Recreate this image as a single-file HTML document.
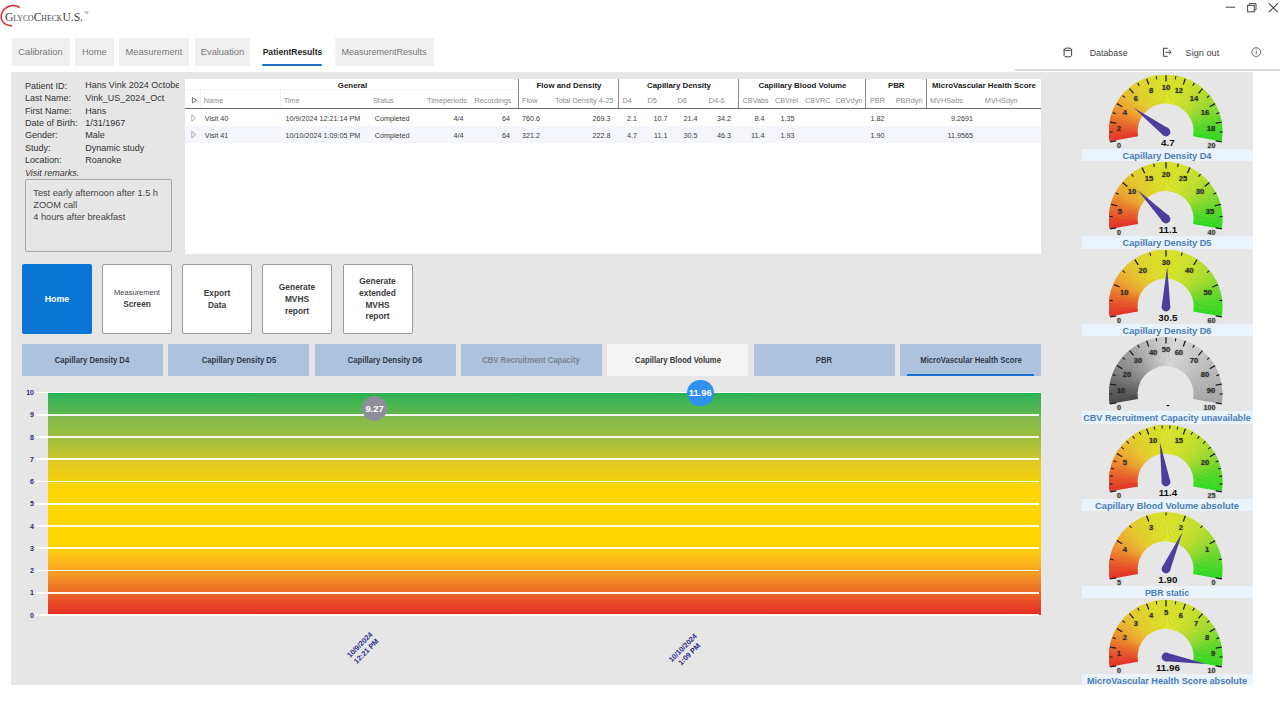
<!DOCTYPE html>
<html><head><meta charset="utf-8"><style>
html,body{margin:0;padding:0;background:#fff;width:1280px;height:720px;overflow:hidden;position:relative;font-family:"Liberation Sans", sans-serif;}
.b{position:absolute;}
.t{position:absolute;white-space:nowrap;line-height:1;}
svg text{font-family:"Liberation Sans",sans-serif;}
</style></head><body>
<svg class="b" style="left:0;top:0" width="100" height="32" viewBox="0 0 100 32">
<path d="M19.6 7.5 C 14 3.8, 4 5.5, 1.4 14.5 C -0.3 21, 5 25.6, 12 25.8" fill="none" stroke="#d42a32" stroke-width="1.5"/>
<text x="5" y="20.7" style="font-family:'Liberation Serif',serif;font-variant:small-caps;font-size:13.5px" fill="#3c3c3c" textLength="78" lengthAdjust="spacingAndGlyphs">GlycoCheckU.S.</text>
<text x="84" y="13.5" style="font-family:'Liberation Sans',sans-serif;font-size:3px" fill="#777">TM</text>
</svg>
<svg class="b" style="left:1220px;top:0" width="60" height="16" viewBox="0 0 60 16">
<line x1="5.8" y1="7.2" x2="15.2" y2="7.2" stroke="#444" stroke-width="1"/>
<rect x="27.6" y="5.4" width="6.6" height="6.4" fill="none" stroke="#444" stroke-width="1"/>
<path d="M29.4 5.4 V3.6 H36 V10 H34.2" fill="none" stroke="#444" stroke-width="1"/>
<path d="M48.8 3.4 L57.8 12.2 M57.8 3.4 L48.8 12.2" stroke="#444" stroke-width="1.1"/>
</svg>
<div class="b" style="left:11.5px;top:37.5px;width:58.0px;height:28px;background:#f0f0f0;"></div>
<div class="t" style="left:-259.50px;width:600px;text-align:center;top:47.73px;font-size:9.3px;color:#787878;font-weight:normal;font-style:normal;">Calibration</div>
<div class="b" style="left:75px;top:37.5px;width:38.6px;height:28px;background:#f0f0f0;"></div>
<div class="t" style="left:-205.70px;width:600px;text-align:center;top:47.73px;font-size:9.3px;color:#787878;font-weight:normal;font-style:normal;">Home</div>
<div class="b" style="left:119px;top:37.5px;width:69.8px;height:28px;background:#f0f0f0;"></div>
<div class="t" style="left:-146.10px;width:600px;text-align:center;top:47.73px;font-size:9.3px;color:#787878;font-weight:normal;font-style:normal;">Measurement</div>
<div class="b" style="left:195px;top:37.5px;width:55px;height:28px;background:#f0f0f0;"></div>
<div class="t" style="left:-77.50px;width:600px;text-align:center;top:47.73px;font-size:9.3px;color:#787878;font-weight:normal;font-style:normal;">Evaluation</div>
<div class="t" style="left:-7.50px;width:600px;text-align:center;top:48.32px;font-size:8.6px;color:#1f1f1f;font-weight:bold;font-style:normal;">PatientResults</div>
<div class="b" style="left:262.3px;top:64.3px;width:60.2px;height:1.7px;background:#1d6cc4;border-radius:1px;"></div>
<div class="b" style="left:334.5px;top:37.5px;width:99px;height:28px;background:#f0f0f0;"></div>
<div class="t" style="left:84.00px;width:600px;text-align:center;top:47.98px;font-size:9px;color:#787878;font-weight:normal;font-style:normal;">MeasurementResults</div>
<svg class="b" style="left:1060px;top:44px" width="210" height="18" viewBox="0 0 210 18">
<ellipse cx="7.85" cy="5.3" rx="3.75" ry="1.25" fill="none" stroke="#3a3a3a" stroke-width="1"/>
<path d="M4.1 5.3 V11.7 A3.75 1.25 0 0 0 11.6 11.7 V5.3" fill="none" stroke="#3a3a3a" stroke-width="1"/>
<path d="M107.6 4.3 H103.4 V12.3 H107.6" fill="none" stroke="#3a3a3a" stroke-width="1"/>
<path d="M105.4 8.3 H110.8 M109.1 6.4 L111.1 8.3 L109.1 10.2" fill="none" stroke="#3a3a3a" stroke-width="0.95"/>
<circle cx="196.25" cy="8.1" r="4.4" fill="none" stroke="#555" stroke-width="0.9"/>
<line x1="196.25" y1="6.9" x2="196.25" y2="10.2" stroke="#555" stroke-width="0.9"/>
<circle cx="196.25" cy="5.6" r="0.5" fill="#777"/>
</svg>
<div class="t" style="left:1089.70px;top:49.41px;font-size:8.85px;color:#444;font-weight:normal;font-style:normal;">Database</div>
<div class="t" style="left:1185.50px;top:49.11px;font-size:9.2px;color:#444;font-weight:normal;font-style:normal;">Sign out</div>
<div class="b" style="left:1015px;top:69px;width:265px;height:2px;background:#d6d6d6;"></div>
<div class="b" style="left:11px;top:72px;width:1242px;height:613px;background:#e6e6e6;"></div>
<div class="t" style="left:24.90px;top:81.88px;font-size:9px;color:#333;font-weight:normal;font-style:normal;">Patient ID:</div>
<div class="t" style="left:85.3px;top:81.36px;width:94px;overflow:hidden;font-size:9px;color:#333">Hans Vink 2024 October</div>
<div class="t" style="left:24.90px;top:94.23px;font-size:9px;color:#333;font-weight:normal;font-style:normal;">Last Name:</div>
<div class="t" style="left:85.30px;top:94.23px;font-size:9px;color:#333;font-weight:normal;font-style:normal;">Vink_US_2024_Oct</div>
<div class="t" style="left:24.90px;top:106.58px;font-size:9px;color:#333;font-weight:normal;font-style:normal;">First Name:</div>
<div class="t" style="left:85.30px;top:106.58px;font-size:9px;color:#333;font-weight:normal;font-style:normal;">Hans</div>
<div class="t" style="left:24.90px;top:118.93px;font-size:9px;color:#333;font-weight:normal;font-style:normal;">Date of Birth:</div>
<div class="t" style="left:85.30px;top:118.93px;font-size:9px;color:#333;font-weight:normal;font-style:normal;">1/31/1967</div>
<div class="t" style="left:24.90px;top:131.28px;font-size:9px;color:#333;font-weight:normal;font-style:normal;">Gender:</div>
<div class="t" style="left:85.30px;top:131.28px;font-size:9px;color:#333;font-weight:normal;font-style:normal;">Male</div>
<div class="t" style="left:24.90px;top:143.63px;font-size:9px;color:#333;font-weight:normal;font-style:normal;">Study:</div>
<div class="t" style="left:85.30px;top:143.63px;font-size:9px;color:#333;font-weight:normal;font-style:normal;">Dynamic study</div>
<div class="t" style="left:24.90px;top:155.98px;font-size:9px;color:#333;font-weight:normal;font-style:normal;">Location:</div>
<div class="t" style="left:85.30px;top:155.98px;font-size:9px;color:#333;font-weight:normal;font-style:normal;">Roanoke</div>
<div class="t" style="left:24.90px;top:169.08px;font-size:9px;color:#333;font-weight:normal;font-style:italic;">Visit remarks.</div>
<div class="b" style="left:25px;top:179.2px;width:147px;height:73.3px;background:#e6e6e6;border:1px solid #a8a8a8;border-radius:2px;box-sizing:border-box;"></div>
<div class="t" style="left:33.30px;top:188.51px;font-size:9.2px;color:#444;font-weight:normal;font-style:normal;">Test early afternoon after 1.5 h</div>
<div class="t" style="left:33.30px;top:200.81px;font-size:9.2px;color:#444;font-weight:normal;font-style:normal;">ZOOM call</div>
<div class="t" style="left:33.30px;top:213.11px;font-size:9.2px;color:#444;font-weight:normal;font-style:normal;">4 hours after breakfast</div>
<div class="b" style="left:185px;top:79px;width:855.5px;height:175px;background:#fff;"></div>
<div class="b" style="left:185px;top:126px;width:855.5px;height:16.5px;background:#f4f6fb;"></div>
<div class="b" style="left:185px;top:107.5px;width:855.5px;height:1.6px;background:#6e6e6e;"></div>
<div class="b" style="left:200px;top:90px;width:1px;height:18px;background:#f0f0f0;"></div>
<div class="b" style="left:280px;top:90px;width:1px;height:18px;background:#f0f0f0;"></div>
<div class="b" style="left:185px;top:89px;width:333px;height:1px;background:#f4f4f4;"></div>
<div class="b" style="left:518px;top:79px;width:1.4px;height:29px;background:#8a8a8a;"></div>
<div class="b" style="left:618px;top:79px;width:1.4px;height:29px;background:#8a8a8a;"></div>
<div class="b" style="left:738px;top:79px;width:1.4px;height:29px;background:#8a8a8a;"></div>
<div class="b" style="left:865px;top:79px;width:1.4px;height:29px;background:#8a8a8a;"></div>
<div class="b" style="left:925.5px;top:79px;width:1.4px;height:29px;background:#8a8a8a;"></div>
<div class="t" style="left:52.50px;width:600px;text-align:center;top:81.51px;font-size:7.9px;color:#1a1a1a;font-weight:bold;font-style:normal;">General</div>
<div class="t" style="left:269.00px;width:600px;text-align:center;top:81.51px;font-size:7.9px;color:#1a1a1a;font-weight:bold;font-style:normal;">Flow and Density</div>
<div class="t" style="left:379.00px;width:600px;text-align:center;top:81.51px;font-size:7.9px;color:#1a1a1a;font-weight:bold;font-style:normal;">Capillary Density</div>
<div class="t" style="left:502.50px;width:600px;text-align:center;top:81.51px;font-size:7.9px;color:#1a1a1a;font-weight:bold;font-style:normal;">Capillary Blood Volume</div>
<div class="t" style="left:596.25px;width:600px;text-align:center;top:81.51px;font-size:7.9px;color:#1a1a1a;font-weight:bold;font-style:normal;">PBR</div>
<div class="t" style="left:684.00px;width:600px;text-align:center;top:81.51px;font-size:7.9px;color:#1a1a1a;font-weight:bold;font-style:normal;">MicroVascular Health Score</div>
<div class="t" style="left:203.75px;top:97.02px;font-size:7.3px;color:#8c8c8c;font-weight:normal;font-style:normal;">Name</div>
<div class="t" style="left:283.75px;top:97.02px;font-size:7.3px;color:#8c8c8c;font-weight:normal;font-style:normal;">Time</div>
<div class="t" style="left:373.00px;top:97.02px;font-size:7.3px;color:#8c8c8c;font-weight:normal;font-style:normal;">Status</div>
<div class="t" style="left:427.00px;top:97.02px;font-size:7.3px;color:#8c8c8c;font-weight:normal;font-style:normal;">Timeperiods</div>
<div class="t" style="left:474.50px;top:97.02px;font-size:7.3px;color:#8c8c8c;font-weight:normal;font-style:normal;">Recordings</div>
<div class="t" style="left:522.00px;top:97.02px;font-size:7.3px;color:#8c8c8c;font-weight:normal;font-style:normal;">Flow</div>
<div class="t" style="left:555.00px;top:97.02px;font-size:7.3px;color:#8c8c8c;font-weight:normal;font-style:normal;">Total Density 4-25</div>
<div class="t" style="left:622.50px;top:97.02px;font-size:7.3px;color:#8c8c8c;font-weight:normal;font-style:normal;">D4</div>
<div class="t" style="left:647.50px;top:97.02px;font-size:7.3px;color:#8c8c8c;font-weight:normal;font-style:normal;">D5</div>
<div class="t" style="left:677.50px;top:97.02px;font-size:7.3px;color:#8c8c8c;font-weight:normal;font-style:normal;">D6</div>
<div class="t" style="left:708.75px;top:97.02px;font-size:7.3px;color:#8c8c8c;font-weight:normal;font-style:normal;">D4-6</div>
<div class="t" style="left:742.50px;top:97.02px;font-size:7.3px;color:#8c8c8c;font-weight:normal;font-style:normal;">CBVabs</div>
<div class="t" style="left:775.00px;top:97.02px;font-size:7.3px;color:#8c8c8c;font-weight:normal;font-style:normal;">CBVrel</div>
<div class="t" style="left:805.00px;top:97.02px;font-size:7.3px;color:#8c8c8c;font-weight:normal;font-style:normal;">CBVRC</div>
<div class="t" style="left:835.60px;top:97.02px;font-size:7.3px;color:#8c8c8c;font-weight:normal;font-style:normal;">CBVdyn</div>
<div class="t" style="left:870.00px;top:97.02px;font-size:7.3px;color:#8c8c8c;font-weight:normal;font-style:normal;">PBR</div>
<div class="t" style="left:895.75px;top:97.02px;font-size:7.3px;color:#8c8c8c;font-weight:normal;font-style:normal;">PBRdyn</div>
<div class="t" style="left:930.00px;top:97.02px;font-size:7.3px;color:#8c8c8c;font-weight:normal;font-style:normal;">MVHSabs</div>
<div class="t" style="left:984.80px;top:97.02px;font-size:7.3px;color:#8c8c8c;font-weight:normal;font-style:normal;">MVHSdyn</div>
<svg class="b" style="left:185px;top:90px" width="20" height="60" viewBox="0 0 20 60"><path d="M7.4 7.6 L11.6 10.3 L7.4 13 Z" fill="none" stroke="#666" stroke-width="0.9"/><path d="M6.8 24.8 L10.6 28 L6.8 31.2 Z" fill="none" stroke="#999" stroke-width="0.8"/><path d="M6.8 41.4 L10.6 44.6 L6.8 47.8 Z" fill="none" stroke="#999" stroke-width="0.8"/></svg>
<div class="t" style="left:204.75px;top:114.51px;font-size:7.2px;color:#393939;font-weight:normal;font-style:normal;">Visit 40</div>
<div class="t" style="left:285.60px;top:114.51px;font-size:7.2px;color:#393939;font-weight:normal;font-style:normal;">10/9/2024 12:21:14 PM</div>
<div class="t" style="left:374.75px;top:114.51px;font-size:7.2px;color:#393939;font-weight:normal;font-style:normal;">Completed</div>
<div class="t" style="right:816.50px;top:114.51px;font-size:7.2px;color:#393939;font-weight:normal;font-style:normal;">4/4</div>
<div class="t" style="right:770.00px;top:114.51px;font-size:7.2px;color:#393939;font-weight:normal;font-style:normal;">64</div>
<div class="t" style="left:522.00px;top:114.51px;font-size:7.2px;color:#393939;font-weight:normal;font-style:normal;">760.6</div>
<div class="t" style="right:669.40px;top:114.51px;font-size:7.2px;color:#393939;font-weight:normal;font-style:normal;">269.3</div>
<div class="t" style="right:643.00px;top:114.51px;font-size:7.2px;color:#393939;font-weight:normal;font-style:normal;">2.1</div>
<div class="t" style="right:612.50px;top:114.51px;font-size:7.2px;color:#393939;font-weight:normal;font-style:normal;">10.7</div>
<div class="t" style="right:582.50px;top:114.51px;font-size:7.2px;color:#393939;font-weight:normal;font-style:normal;">21.4</div>
<div class="t" style="right:549.00px;top:114.51px;font-size:7.2px;color:#393939;font-weight:normal;font-style:normal;">34.2</div>
<div class="t" style="right:515.60px;top:114.51px;font-size:7.2px;color:#393939;font-weight:normal;font-style:normal;">8.4</div>
<div class="t" style="right:485.60px;top:114.51px;font-size:7.2px;color:#393939;font-weight:normal;font-style:normal;">1.35</div>
<div class="t" style="right:395.60px;top:114.51px;font-size:7.2px;color:#393939;font-weight:normal;font-style:normal;">1.82</div>
<div class="t" style="right:307.00px;top:114.51px;font-size:7.2px;color:#393939;font-weight:normal;font-style:normal;">9.2691</div>
<div class="t" style="left:204.75px;top:131.61px;font-size:7.2px;color:#393939;font-weight:normal;font-style:normal;">Visit 41</div>
<div class="t" style="left:285.60px;top:131.61px;font-size:7.2px;color:#393939;font-weight:normal;font-style:normal;">10/10/2024 1:09:05 PM</div>
<div class="t" style="left:374.75px;top:131.61px;font-size:7.2px;color:#393939;font-weight:normal;font-style:normal;">Completed</div>
<div class="t" style="right:816.50px;top:131.61px;font-size:7.2px;color:#393939;font-weight:normal;font-style:normal;">4/4</div>
<div class="t" style="right:770.00px;top:131.61px;font-size:7.2px;color:#393939;font-weight:normal;font-style:normal;">64</div>
<div class="t" style="left:522.00px;top:131.61px;font-size:7.2px;color:#393939;font-weight:normal;font-style:normal;">321.2</div>
<div class="t" style="right:669.40px;top:131.61px;font-size:7.2px;color:#393939;font-weight:normal;font-style:normal;">222.8</div>
<div class="t" style="right:643.00px;top:131.61px;font-size:7.2px;color:#393939;font-weight:normal;font-style:normal;">4.7</div>
<div class="t" style="right:612.50px;top:131.61px;font-size:7.2px;color:#393939;font-weight:normal;font-style:normal;">11.1</div>
<div class="t" style="right:582.50px;top:131.61px;font-size:7.2px;color:#393939;font-weight:normal;font-style:normal;">30.5</div>
<div class="t" style="right:549.00px;top:131.61px;font-size:7.2px;color:#393939;font-weight:normal;font-style:normal;">46.3</div>
<div class="t" style="right:515.60px;top:131.61px;font-size:7.2px;color:#393939;font-weight:normal;font-style:normal;">11.4</div>
<div class="t" style="right:485.60px;top:131.61px;font-size:7.2px;color:#393939;font-weight:normal;font-style:normal;">1.93</div>
<div class="t" style="right:395.60px;top:131.61px;font-size:7.2px;color:#393939;font-weight:normal;font-style:normal;">1.90</div>
<div class="t" style="right:307.00px;top:131.61px;font-size:7.2px;color:#393939;font-weight:normal;font-style:normal;">11.9565</div>
<div class="b" style="left:21.5px;top:263.5px;width:70px;height:70.2px;background:#0b75d5;border-radius:2px;"></div>
<div class="t" style="left:-243.00px;width:600px;text-align:center;top:294.55px;font-size:8.8px;color:#fff;font-weight:bold;font-style:normal;">Home</div>
<div class="b" style="left:102px;top:264px;width:70px;height:70px;background:#fff;border:1px solid #9a9a9a;border-radius:2px;box-sizing:border-box;"></div>
<div class="t" style="left:-163.00px;width:600px;text-align:center;top:288.85px;font-size:7.5px;color:#3c3c3c;font-weight:normal;font-style:normal;">Measurement</div>
<div class="t" style="left:-163.00px;width:600px;text-align:center;top:300.17px;font-size:8.3px;color:#3c3c3c;font-weight:bold;font-style:normal;">Screen</div>
<div class="b" style="left:182px;top:264px;width:70px;height:70px;background:#fff;border:1px solid #9a9a9a;border-radius:2px;box-sizing:border-box;"></div>
<div class="t" style="left:-83.00px;width:600px;text-align:center;top:289.04px;font-size:8.4px;color:#3c3c3c;font-weight:bold;font-style:normal;">Export</div>
<div class="t" style="left:-83.00px;width:600px;text-align:center;top:300.74px;font-size:8.4px;color:#3c3c3c;font-weight:bold;font-style:normal;">Data</div>
<div class="b" style="left:262px;top:264px;width:70px;height:70px;background:#fff;border:1px solid #9a9a9a;border-radius:2px;box-sizing:border-box;"></div>
<div class="t" style="left:-3.00px;width:600px;text-align:center;top:283.19px;font-size:8.4px;color:#3c3c3c;font-weight:bold;font-style:normal;">Generate</div>
<div class="t" style="left:-3.00px;width:600px;text-align:center;top:294.89px;font-size:8.4px;color:#3c3c3c;font-weight:bold;font-style:normal;">MVHS</div>
<div class="t" style="left:-3.00px;width:600px;text-align:center;top:306.59px;font-size:8.4px;color:#3c3c3c;font-weight:bold;font-style:normal;">report</div>
<div class="b" style="left:342.5px;top:264px;width:70px;height:70px;background:#fff;border:1px solid #9a9a9a;border-radius:2px;box-sizing:border-box;"></div>
<div class="t" style="left:77.50px;width:600px;text-align:center;top:277.34px;font-size:8.4px;color:#3c3c3c;font-weight:bold;font-style:normal;">Generate</div>
<div class="t" style="left:77.50px;width:600px;text-align:center;top:289.04px;font-size:8.4px;color:#3c3c3c;font-weight:bold;font-style:normal;">extended</div>
<div class="t" style="left:77.50px;width:600px;text-align:center;top:300.74px;font-size:8.4px;color:#3c3c3c;font-weight:bold;font-style:normal;">MVHS</div>
<div class="t" style="left:77.50px;width:600px;text-align:center;top:312.44px;font-size:8.4px;color:#3c3c3c;font-weight:bold;font-style:normal;">report</div>
<div class="b" style="left:21.75px;top:344px;width:141px;height:32px;background:#adc2dc;"></div>
<div class="t" style="left:-207.75px;width:600px;text-align:center;top:355.95px;font-size:8.8px;color:#2f3a4c;font-weight:bold;font-style:normal;transform:scaleX(0.875);transform-origin:center center;">Capillary Density D4</div>
<div class="b" style="left:168.15px;top:344px;width:141px;height:32px;background:#adc2dc;"></div>
<div class="t" style="left:-61.35px;width:600px;text-align:center;top:355.95px;font-size:8.8px;color:#2f3a4c;font-weight:bold;font-style:normal;transform:scaleX(0.875);transform-origin:center center;">Capillary Density D5</div>
<div class="b" style="left:314.55px;top:344px;width:141px;height:32px;background:#adc2dc;"></div>
<div class="t" style="left:85.05px;width:600px;text-align:center;top:355.95px;font-size:8.8px;color:#2f3a4c;font-weight:bold;font-style:normal;transform:scaleX(0.875);transform-origin:center center;">Capillary Density D6</div>
<div class="b" style="left:460.95px;top:344px;width:141px;height:32px;background:#adc2dc;"></div>
<div class="t" style="left:231.45px;width:600px;text-align:center;top:355.95px;font-size:8.8px;color:#76828f;font-weight:bold;font-style:normal;transform:scaleX(0.875);transform-origin:center center;">CBV Recruitment Capacity</div>
<div class="b" style="left:607.35px;top:344px;width:141px;height:32px;background:#f3f3f3;"></div>
<div class="t" style="left:377.85px;width:600px;text-align:center;top:355.95px;font-size:8.8px;color:#383838;font-weight:bold;font-style:normal;transform:scaleX(0.875);transform-origin:center center;">Capillary Blood Volume</div>
<div class="b" style="left:753.75px;top:344px;width:141px;height:32px;background:#adc2dc;"></div>
<div class="t" style="left:524.25px;width:600px;text-align:center;top:355.95px;font-size:8.8px;color:#2f3a4c;font-weight:bold;font-style:normal;transform:scaleX(0.875);transform-origin:center center;">PBR</div>
<div class="b" style="left:900.15px;top:344px;width:141px;height:32px;background:#adc2dc;"></div>
<div class="t" style="left:670.65px;width:600px;text-align:center;top:355.95px;font-size:8.8px;color:#2f3a4c;font-weight:bold;font-style:normal;transform:scaleX(0.875);transform-origin:center center;">MicroVascular Health Score</div>
<div class="b" style="left:907px;top:374px;width:127px;height:2px;background:#1a6fcf;"></div>
<div class="b" style="left:48px;top:392.5px;width:992.5px;height:222.5px;background:linear-gradient(to bottom,#2db155 0%,#5db74f 9%,#82ba4b 11%,#9cbd40 20%,#c8c52c 29%,#e2c924 31%,#f4d20c 40%,#ffd600 45%,#ffd600 68%,#fdc812 72%,#f6a322 80%,#ef8526 85%,#ec6727 90%,#e42b26 100%);"></div>
<div class="b" style="left:36px;top:391.7px;width:1002.5px;height:1.6px;background:rgba(255,255,250,0.92);"></div>
<div class="t" style="right:1246.00px;top:389.07px;font-size:7px;color:#2b2b80;font-weight:bold;font-style:normal;">10</div>
<div class="b" style="left:36px;top:413.95px;width:1002.5px;height:1.6px;background:rgba(255,255,250,0.92);"></div>
<div class="t" style="right:1246.00px;top:411.32px;font-size:7px;color:#2b2b80;font-weight:bold;font-style:normal;">9</div>
<div class="b" style="left:36px;top:436.2px;width:1002.5px;height:1.6px;background:rgba(255,255,250,0.92);"></div>
<div class="t" style="right:1246.00px;top:433.57px;font-size:7px;color:#2b2b80;font-weight:bold;font-style:normal;">8</div>
<div class="b" style="left:36px;top:458.45px;width:1002.5px;height:1.6px;background:rgba(255,255,250,0.92);"></div>
<div class="t" style="right:1246.00px;top:455.82px;font-size:7px;color:#2b2b80;font-weight:bold;font-style:normal;">7</div>
<div class="b" style="left:36px;top:480.7px;width:1002.5px;height:1.6px;background:rgba(255,255,250,0.92);"></div>
<div class="t" style="right:1246.00px;top:478.07px;font-size:7px;color:#2b2b80;font-weight:bold;font-style:normal;">6</div>
<div class="b" style="left:36px;top:502.95px;width:1002.5px;height:1.6px;background:rgba(255,255,250,0.92);"></div>
<div class="t" style="right:1246.00px;top:500.32px;font-size:7px;color:#2b2b80;font-weight:bold;font-style:normal;">5</div>
<div class="b" style="left:36px;top:525.2px;width:1002.5px;height:1.6px;background:rgba(255,255,250,0.92);"></div>
<div class="t" style="right:1246.00px;top:522.57px;font-size:7px;color:#2b2b80;font-weight:bold;font-style:normal;">4</div>
<div class="b" style="left:36px;top:547.45px;width:1002.5px;height:1.6px;background:rgba(255,255,250,0.92);"></div>
<div class="t" style="right:1246.00px;top:544.82px;font-size:7px;color:#2b2b80;font-weight:bold;font-style:normal;">3</div>
<div class="b" style="left:36px;top:569.7px;width:1002.5px;height:1.6px;background:rgba(255,255,250,0.92);"></div>
<div class="t" style="right:1246.00px;top:567.07px;font-size:7px;color:#2b2b80;font-weight:bold;font-style:normal;">2</div>
<div class="b" style="left:36px;top:591.95px;width:1002.5px;height:1.6px;background:rgba(255,255,250,0.92);"></div>
<div class="t" style="right:1246.00px;top:589.32px;font-size:7px;color:#2b2b80;font-weight:bold;font-style:normal;">1</div>
<div class="b" style="left:36px;top:614.2px;width:1002.5px;height:1.6px;background:rgba(255,255,250,0.92);"></div>
<div class="t" style="right:1246.00px;top:611.57px;font-size:7px;color:#2b2b80;font-weight:bold;font-style:normal;">0</div>
<div class="b" style="left:362px;top:396.2px;width:25px;height:25px;border-radius:50%;background:#8f8f9b;"></div>
<div class="t" style="left:74.50px;width:600px;text-align:center;top:404.24px;font-size:9.4px;color:#fff;font-weight:bold;font-style:normal;">9.27</div>
<div class="b" style="left:687.05px;top:379.65px;width:26.5px;height:26.5px;border-radius:50%;background:#3090f0;"></div>
<div class="t" style="left:400.20px;width:600px;text-align:center;top:388.34px;font-size:9.4px;color:#fff;font-weight:bold;font-style:normal;">11.96</div>
<div class="t" style="left:323px;top:639px;width:80px;height:18px;text-align:center;font-size:7.3px;line-height:9px;color:#2a2a8c;font-weight:bold;transform:rotate(-45deg);">10/9/2024<br>12:21 PM</div>
<div class="t" style="left:645.5px;top:641.5px;width:80px;height:18px;text-align:center;font-size:7.3px;line-height:9px;color:#2a2a8c;font-weight:bold;transform:rotate(-45deg);">10/10/2024<br>1:09 PM</div>
<div class="b" style="left:1108.60px;top:74.50px;width:114px;height:114px;background:repeating-conic-gradient(from 260deg at 50% 50%, rgba(0,0,0,0) 0deg, rgba(0,0,0,0) 1.2deg, rgba(0,0,0,0.035) 1.2deg, rgba(0,0,0,0.035) 2deg), conic-gradient(from 260deg at 50% 50%, #e5322a 0deg, #ea682c 20deg, #f0a832 40deg, #e6cc30 60deg, #e0dc2c 80deg, #dce42c 100deg, #d4e42c 120deg, #c0e030 140deg, #98dc30 160deg, #5cda2c 180deg, #30dc22 200deg, #30dc22 280deg, #e5322a 280deg, #e5322a 360deg);clip-path:path('M0.87 66.90 A57 57 0 1 1 113.13 66.90 L84.57 61.86 A28 28 0 1 0 29.43 61.86 Z');"></div>
<svg class="b" style="left:1098.60px;top:72.50px" width="134" height="118" viewBox="-10 -2 134 118"><line x1="1.16" y1="66.85" x2="7.27" y2="65.77" stroke="#1e1e1e" stroke-width="1.3"/><line x1="0.30" y1="57.00" x2="3.50" y2="57.00" stroke="#1e1e1e" stroke-width="1.1"/><line x1="1.16" y1="47.15" x2="7.27" y2="48.23" stroke="#1e1e1e" stroke-width="1.3"/><line x1="3.72" y1="37.61" x2="6.73" y2="38.70" stroke="#1e1e1e" stroke-width="1.1"/><line x1="7.90" y1="28.65" x2="13.27" y2="31.75" stroke="#1e1e1e" stroke-width="1.3"/><line x1="13.57" y1="20.55" x2="16.02" y2="22.61" stroke="#1e1e1e" stroke-width="1.1"/><line x1="20.55" y1="13.57" x2="24.54" y2="18.31" stroke="#1e1e1e" stroke-width="1.3"/><line x1="28.65" y1="7.90" x2="30.25" y2="10.67" stroke="#1e1e1e" stroke-width="1.1"/><line x1="37.61" y1="3.72" x2="39.73" y2="9.55" stroke="#1e1e1e" stroke-width="1.3"/><line x1="47.15" y1="1.16" x2="47.71" y2="4.31" stroke="#1e1e1e" stroke-width="1.1"/><line x1="57.00" y1="0.30" x2="57.00" y2="6.50" stroke="#1e1e1e" stroke-width="1.3"/><line x1="66.85" y1="1.16" x2="66.29" y2="4.31" stroke="#1e1e1e" stroke-width="1.1"/><line x1="76.39" y1="3.72" x2="74.27" y2="9.55" stroke="#1e1e1e" stroke-width="1.3"/><line x1="85.35" y1="7.90" x2="83.75" y2="10.67" stroke="#1e1e1e" stroke-width="1.1"/><line x1="93.45" y1="13.57" x2="89.46" y2="18.31" stroke="#1e1e1e" stroke-width="1.3"/><line x1="100.43" y1="20.55" x2="97.98" y2="22.61" stroke="#1e1e1e" stroke-width="1.1"/><line x1="106.10" y1="28.65" x2="100.73" y2="31.75" stroke="#1e1e1e" stroke-width="1.3"/><line x1="110.28" y1="37.61" x2="107.27" y2="38.70" stroke="#1e1e1e" stroke-width="1.1"/><line x1="112.84" y1="47.15" x2="106.73" y2="48.23" stroke="#1e1e1e" stroke-width="1.3"/><line x1="113.70" y1="57.00" x2="110.50" y2="57.00" stroke="#1e1e1e" stroke-width="1.1"/><line x1="112.84" y1="66.85" x2="106.73" y2="65.77" stroke="#1e1e1e" stroke-width="1.3"/><text x="7.76" y="55.92" text-anchor="start" font-weight="bold" font-size="7.6" fill="#2a2a2a" style="text-shadow:0 0 1.5px rgba(0,0,0,0.45)">2</text><text x="13.70" y="39.60" text-anchor="start" font-weight="bold" font-size="7.6" fill="#2a2a2a" style="text-shadow:0 0 1.5px rgba(0,0,0,0.45)">4</text><text x="24.86" y="26.30" text-anchor="start" font-weight="bold" font-size="7.6" fill="#2a2a2a" style="text-shadow:0 0 1.5px rgba(0,0,0,0.45)">6</text><text x="39.90" y="17.62" text-anchor="start" font-weight="bold" font-size="7.6" fill="#2a2a2a" style="text-shadow:0 0 1.5px rgba(0,0,0,0.45)">8</text><text x="57.00" y="14.60" text-anchor="middle" font-weight="bold" font-size="7.6" fill="#2a2a2a" style="text-shadow:0 0 1.5px rgba(0,0,0,0.45)">10</text><text x="74.10" y="17.62" text-anchor="end" font-weight="bold" font-size="7.6" fill="#2a2a2a" style="text-shadow:0 0 1.5px rgba(0,0,0,0.45)">12</text><text x="89.14" y="26.30" text-anchor="end" font-weight="bold" font-size="7.6" fill="#2a2a2a" style="text-shadow:0 0 1.5px rgba(0,0,0,0.45)">14</text><text x="100.30" y="39.60" text-anchor="end" font-weight="bold" font-size="7.6" fill="#2a2a2a" style="text-shadow:0 0 1.5px rgba(0,0,0,0.45)">16</text><text x="106.24" y="55.92" text-anchor="end" font-weight="bold" font-size="7.6" fill="#2a2a2a" style="text-shadow:0 0 1.5px rgba(0,0,0,0.45)">18</text><text x="7.90" y="73.30" text-anchor="start" font-weight="bold" font-size="7.2" fill="#3a3a3a" style="text-shadow:0 0 1.5px rgba(0,0,0,0.45)">0</text><text x="106.40" y="73.30" text-anchor="end" font-weight="bold" font-size="7.2" fill="#3a3a3a" style="text-shadow:0 0 1.5px rgba(0,0,0,0.45)">20</text><path d="M54.41 60.43 L24.66 32.63 L59.59 53.57 Z" fill="#4b3e9c"/><circle cx="57" cy="57" r="4.4" fill="#4b3e9c"/><text x="58.90" y="70.70" text-anchor="middle" font-family="Liberation Sans" font-weight="bold" font-size="9.8" fill="#111">4.7</text></svg>
<div class="b" style="left:1081.5px;top:148.9px;width:171.5px;height:12.3px;background:#eaf3fb;"></div>
<div class="t" style="left:867.30px;width:600px;text-align:center;top:151.83px;font-size:9.3px;color:#4a7db5;font-weight:bold;font-style:normal;transform:scaleX(0.989);transform-origin:center center;">Capillary Density D4</div>
<div class="b" style="left:1108.60px;top:162.05px;width:114px;height:114px;background:repeating-conic-gradient(from 260deg at 50% 50%, rgba(0,0,0,0) 0deg, rgba(0,0,0,0) 1.2deg, rgba(0,0,0,0.035) 1.2deg, rgba(0,0,0,0.035) 2deg), conic-gradient(from 260deg at 50% 50%, #e5322a 0deg, #ea682c 20deg, #f0a832 40deg, #e6cc30 60deg, #e0dc2c 80deg, #dce42c 100deg, #d4e42c 120deg, #c0e030 140deg, #98dc30 160deg, #5cda2c 180deg, #30dc22 200deg, #30dc22 280deg, #e5322a 280deg, #e5322a 360deg);clip-path:path('M0.87 66.90 A57 57 0 1 1 113.13 66.90 L84.57 61.86 A28 28 0 1 0 29.43 61.86 Z');"></div>
<svg class="b" style="left:1098.60px;top:160.05px" width="134" height="118" viewBox="-10 -2 134 118"><line x1="1.16" y1="66.85" x2="7.27" y2="65.77" stroke="#1e1e1e" stroke-width="1.3"/><line x1="0.35" y1="54.53" x2="3.55" y2="54.67" stroke="#1e1e1e" stroke-width="1.1"/><line x1="2.23" y1="42.32" x2="8.22" y2="43.93" stroke="#1e1e1e" stroke-width="1.3"/><line x1="6.71" y1="30.82" x2="9.54" y2="32.30" stroke="#1e1e1e" stroke-width="1.1"/><line x1="13.57" y1="20.55" x2="18.31" y2="24.54" stroke="#1e1e1e" stroke-width="1.3"/><line x1="22.48" y1="12.02" x2="24.43" y2="14.56" stroke="#1e1e1e" stroke-width="1.1"/><line x1="33.04" y1="5.61" x2="35.66" y2="11.23" stroke="#1e1e1e" stroke-width="1.3"/><line x1="44.73" y1="1.64" x2="45.42" y2="4.77" stroke="#1e1e1e" stroke-width="1.1"/><line x1="57.00" y1="0.30" x2="57.00" y2="6.50" stroke="#1e1e1e" stroke-width="1.3"/><line x1="69.27" y1="1.64" x2="68.58" y2="4.77" stroke="#1e1e1e" stroke-width="1.1"/><line x1="80.96" y1="5.61" x2="78.34" y2="11.23" stroke="#1e1e1e" stroke-width="1.3"/><line x1="91.52" y1="12.02" x2="89.57" y2="14.56" stroke="#1e1e1e" stroke-width="1.1"/><line x1="100.43" y1="20.55" x2="95.69" y2="24.54" stroke="#1e1e1e" stroke-width="1.3"/><line x1="107.29" y1="30.82" x2="104.46" y2="32.30" stroke="#1e1e1e" stroke-width="1.1"/><line x1="111.77" y1="42.32" x2="105.78" y2="43.93" stroke="#1e1e1e" stroke-width="1.3"/><line x1="113.65" y1="54.53" x2="110.45" y2="54.67" stroke="#1e1e1e" stroke-width="1.1"/><line x1="112.84" y1="66.85" x2="106.73" y2="65.77" stroke="#1e1e1e" stroke-width="1.3"/><text x="8.70" y="51.66" text-anchor="start" font-weight="bold" font-size="7.6" fill="#2a2a2a" style="text-shadow:0 0 1.5px rgba(0,0,0,0.45)">5</text><text x="18.70" y="32.46" text-anchor="start" font-weight="bold" font-size="7.6" fill="#2a2a2a" style="text-shadow:0 0 1.5px rgba(0,0,0,0.45)">10</text><text x="35.87" y="19.28" text-anchor="start" font-weight="bold" font-size="7.6" fill="#2a2a2a" style="text-shadow:0 0 1.5px rgba(0,0,0,0.45)">15</text><text x="57.00" y="14.60" text-anchor="middle" font-weight="bold" font-size="7.6" fill="#2a2a2a" style="text-shadow:0 0 1.5px rgba(0,0,0,0.45)">20</text><text x="78.13" y="19.28" text-anchor="end" font-weight="bold" font-size="7.6" fill="#2a2a2a" style="text-shadow:0 0 1.5px rgba(0,0,0,0.45)">25</text><text x="95.30" y="32.46" text-anchor="end" font-weight="bold" font-size="7.6" fill="#2a2a2a" style="text-shadow:0 0 1.5px rgba(0,0,0,0.45)">30</text><text x="105.30" y="51.66" text-anchor="end" font-weight="bold" font-size="7.6" fill="#2a2a2a" style="text-shadow:0 0 1.5px rgba(0,0,0,0.45)">35</text><text x="7.90" y="73.30" text-anchor="start" font-weight="bold" font-size="7.2" fill="#3a3a3a" style="text-shadow:0 0 1.5px rgba(0,0,0,0.45)">0</text><text x="106.40" y="73.30" text-anchor="end" font-weight="bold" font-size="7.2" fill="#3a3a3a" style="text-shadow:0 0 1.5px rgba(0,0,0,0.45)">40</text><path d="M53.93 60.01 L28.61 28.11 L60.07 53.99 Z" fill="#4b3e9c"/><circle cx="57" cy="57" r="4.4" fill="#4b3e9c"/><text x="58.90" y="70.70" text-anchor="middle" font-family="Liberation Sans" font-weight="bold" font-size="9.8" fill="#111">11.1</text></svg>
<div class="b" style="left:1081.5px;top:236.35px;width:171.5px;height:12.3px;background:#eaf3fb;"></div>
<div class="t" style="left:867.30px;width:600px;text-align:center;top:239.28px;font-size:9.3px;color:#4a7db5;font-weight:bold;font-style:normal;transform:scaleX(0.989);transform-origin:center center;">Capillary Density D5</div>
<div class="b" style="left:1108.60px;top:249.60px;width:114px;height:114px;background:repeating-conic-gradient(from 260deg at 50% 50%, rgba(0,0,0,0) 0deg, rgba(0,0,0,0) 1.2deg, rgba(0,0,0,0.035) 1.2deg, rgba(0,0,0,0.035) 2deg), conic-gradient(from 260deg at 50% 50%, #e5322a 0deg, #ea682c 20deg, #f0a832 40deg, #e6cc30 60deg, #e0dc2c 80deg, #dce42c 100deg, #d4e42c 120deg, #c0e030 140deg, #98dc30 160deg, #5cda2c 180deg, #30dc22 200deg, #30dc22 280deg, #e5322a 280deg, #e5322a 360deg);clip-path:path('M0.87 66.90 A57 57 0 1 1 113.13 66.90 L84.57 61.86 A28 28 0 1 0 29.43 61.86 Z');"></div>
<svg class="b" style="left:1098.60px;top:247.60px" width="134" height="118" viewBox="-10 -2 134 118"><line x1="1.16" y1="66.85" x2="7.27" y2="65.77" stroke="#1e1e1e" stroke-width="1.3"/><line x1="0.68" y1="50.42" x2="3.86" y2="50.79" stroke="#1e1e1e" stroke-width="1.1"/><line x1="4.94" y1="34.54" x2="10.63" y2="37.00" stroke="#1e1e1e" stroke-width="1.3"/><line x1="13.57" y1="20.55" x2="16.02" y2="22.61" stroke="#1e1e1e" stroke-width="1.1"/><line x1="25.84" y1="9.63" x2="29.25" y2="14.81" stroke="#1e1e1e" stroke-width="1.3"/><line x1="40.74" y1="2.68" x2="41.66" y2="5.75" stroke="#1e1e1e" stroke-width="1.1"/><line x1="57.00" y1="0.30" x2="57.00" y2="6.50" stroke="#1e1e1e" stroke-width="1.3"/><line x1="73.26" y1="2.68" x2="72.34" y2="5.75" stroke="#1e1e1e" stroke-width="1.1"/><line x1="88.16" y1="9.63" x2="84.75" y2="14.81" stroke="#1e1e1e" stroke-width="1.3"/><line x1="100.43" y1="20.55" x2="97.98" y2="22.61" stroke="#1e1e1e" stroke-width="1.1"/><line x1="109.06" y1="34.54" x2="103.37" y2="37.00" stroke="#1e1e1e" stroke-width="1.3"/><line x1="113.32" y1="50.42" x2="110.14" y2="50.79" stroke="#1e1e1e" stroke-width="1.1"/><line x1="112.84" y1="66.85" x2="106.73" y2="65.77" stroke="#1e1e1e" stroke-width="1.3"/><text x="11.09" y="44.80" text-anchor="start" font-weight="bold" font-size="7.6" fill="#2a2a2a" style="text-shadow:0 0 1.5px rgba(0,0,0,0.45)">10</text><text x="29.52" y="22.83" text-anchor="start" font-weight="bold" font-size="7.6" fill="#2a2a2a" style="text-shadow:0 0 1.5px rgba(0,0,0,0.45)">20</text><text x="57.00" y="14.60" text-anchor="middle" font-weight="bold" font-size="7.6" fill="#2a2a2a" style="text-shadow:0 0 1.5px rgba(0,0,0,0.45)">30</text><text x="84.48" y="22.83" text-anchor="end" font-weight="bold" font-size="7.6" fill="#2a2a2a" style="text-shadow:0 0 1.5px rgba(0,0,0,0.45)">40</text><text x="102.91" y="44.80" text-anchor="end" font-weight="bold" font-size="7.6" fill="#2a2a2a" style="text-shadow:0 0 1.5px rgba(0,0,0,0.45)">50</text><text x="7.90" y="73.30" text-anchor="start" font-weight="bold" font-size="7.2" fill="#3a3a3a" style="text-shadow:0 0 1.5px rgba(0,0,0,0.45)">0</text><text x="106.40" y="73.30" text-anchor="end" font-weight="bold" font-size="7.2" fill="#3a3a3a" style="text-shadow:0 0 1.5px rgba(0,0,0,0.45)">60</text><path d="M52.70 56.87 L58.18 16.52 L61.30 57.13 Z" fill="#4b3e9c"/><circle cx="57" cy="57" r="4.4" fill="#4b3e9c"/><text x="58.90" y="70.70" text-anchor="middle" font-family="Liberation Sans" font-weight="bold" font-size="9.8" fill="#111">30.5</text></svg>
<div class="b" style="left:1081.5px;top:323.8px;width:171.5px;height:12.3px;background:#eaf3fb;"></div>
<div class="t" style="left:867.30px;width:600px;text-align:center;top:326.73px;font-size:9.3px;color:#4a7db5;font-weight:bold;font-style:normal;transform:scaleX(0.989);transform-origin:center center;">Capillary Density D6</div>
<div class="b" style="left:1108.60px;top:337.15px;width:114px;height:114px;background:repeating-conic-gradient(from 260deg at 50% 50%, rgba(0,0,0,0) 0deg, rgba(0,0,0,0) 1.2deg, rgba(0,0,0,0.03) 1.2deg, rgba(0,0,0,0.03) 2deg), conic-gradient(from 260deg at 50% 50%, #4a4a4a 0deg, #8a8a8a 40deg, #c8c8c8 90deg, #d8d8d8 110deg, #bdbdbd 160deg, #a8a8a8 200deg, #a8a8a8 280deg, #4a4a4a 280deg, #4a4a4a 360deg);clip-path:path('M0.87 66.90 A57 57 0 1 1 113.13 66.90 L84.57 61.86 A28 28 0 1 0 29.43 61.86 Z');"></div>
<svg class="b" style="left:1098.60px;top:335.15px" width="134" height="118" viewBox="-10 -2 134 118"><line x1="1.16" y1="66.85" x2="7.27" y2="65.77" stroke="#1e1e1e" stroke-width="1.3"/><line x1="0.30" y1="57.00" x2="3.50" y2="57.00" stroke="#1e1e1e" stroke-width="1.1"/><line x1="1.16" y1="47.15" x2="7.27" y2="48.23" stroke="#1e1e1e" stroke-width="1.3"/><line x1="3.72" y1="37.61" x2="6.73" y2="38.70" stroke="#1e1e1e" stroke-width="1.1"/><line x1="7.90" y1="28.65" x2="13.27" y2="31.75" stroke="#1e1e1e" stroke-width="1.3"/><line x1="13.57" y1="20.55" x2="16.02" y2="22.61" stroke="#1e1e1e" stroke-width="1.1"/><line x1="20.55" y1="13.57" x2="24.54" y2="18.31" stroke="#1e1e1e" stroke-width="1.3"/><line x1="28.65" y1="7.90" x2="30.25" y2="10.67" stroke="#1e1e1e" stroke-width="1.1"/><line x1="37.61" y1="3.72" x2="39.73" y2="9.55" stroke="#1e1e1e" stroke-width="1.3"/><line x1="47.15" y1="1.16" x2="47.71" y2="4.31" stroke="#1e1e1e" stroke-width="1.1"/><line x1="57.00" y1="0.30" x2="57.00" y2="6.50" stroke="#1e1e1e" stroke-width="1.3"/><line x1="66.85" y1="1.16" x2="66.29" y2="4.31" stroke="#1e1e1e" stroke-width="1.1"/><line x1="76.39" y1="3.72" x2="74.27" y2="9.55" stroke="#1e1e1e" stroke-width="1.3"/><line x1="85.35" y1="7.90" x2="83.75" y2="10.67" stroke="#1e1e1e" stroke-width="1.1"/><line x1="93.45" y1="13.57" x2="89.46" y2="18.31" stroke="#1e1e1e" stroke-width="1.3"/><line x1="100.43" y1="20.55" x2="97.98" y2="22.61" stroke="#1e1e1e" stroke-width="1.1"/><line x1="106.10" y1="28.65" x2="100.73" y2="31.75" stroke="#1e1e1e" stroke-width="1.3"/><line x1="110.28" y1="37.61" x2="107.27" y2="38.70" stroke="#1e1e1e" stroke-width="1.1"/><line x1="112.84" y1="47.15" x2="106.73" y2="48.23" stroke="#1e1e1e" stroke-width="1.3"/><line x1="113.70" y1="57.00" x2="110.50" y2="57.00" stroke="#1e1e1e" stroke-width="1.1"/><line x1="112.84" y1="66.85" x2="106.73" y2="65.77" stroke="#1e1e1e" stroke-width="1.3"/><text x="7.76" y="55.92" text-anchor="start" font-weight="bold" font-size="7.6" fill="#2a2a2a" style="text-shadow:0 0 1.5px rgba(0,0,0,0.45)">10</text><text x="13.70" y="39.60" text-anchor="start" font-weight="bold" font-size="7.6" fill="#2a2a2a" style="text-shadow:0 0 1.5px rgba(0,0,0,0.45)">20</text><text x="24.86" y="26.30" text-anchor="start" font-weight="bold" font-size="7.6" fill="#2a2a2a" style="text-shadow:0 0 1.5px rgba(0,0,0,0.45)">30</text><text x="39.90" y="17.62" text-anchor="start" font-weight="bold" font-size="7.6" fill="#2a2a2a" style="text-shadow:0 0 1.5px rgba(0,0,0,0.45)">40</text><text x="57.00" y="14.60" text-anchor="middle" font-weight="bold" font-size="7.6" fill="#2a2a2a" style="text-shadow:0 0 1.5px rgba(0,0,0,0.45)">50</text><text x="74.10" y="17.62" text-anchor="end" font-weight="bold" font-size="7.6" fill="#2a2a2a" style="text-shadow:0 0 1.5px rgba(0,0,0,0.45)">60</text><text x="89.14" y="26.30" text-anchor="end" font-weight="bold" font-size="7.6" fill="#2a2a2a" style="text-shadow:0 0 1.5px rgba(0,0,0,0.45)">70</text><text x="100.30" y="39.60" text-anchor="end" font-weight="bold" font-size="7.6" fill="#2a2a2a" style="text-shadow:0 0 1.5px rgba(0,0,0,0.45)">80</text><text x="106.24" y="55.92" text-anchor="end" font-weight="bold" font-size="7.6" fill="#2a2a2a" style="text-shadow:0 0 1.5px rgba(0,0,0,0.45)">90</text><text x="7.90" y="73.30" text-anchor="start" font-weight="bold" font-size="7.2" fill="#3a3a3a" style="text-shadow:0 0 1.5px rgba(0,0,0,0.45)">0</text><text x="106.40" y="73.30" text-anchor="end" font-weight="bold" font-size="7.2" fill="#3a3a3a" style="text-shadow:0 0 1.5px rgba(0,0,0,0.45)">100</text><text x="58.90" y="70.70" text-anchor="middle" font-family="Liberation Sans" font-weight="bold" font-size="9.8" fill="#111">-</text></svg>
<div class="b" style="left:1081.5px;top:411.25px;width:171.5px;height:12.3px;background:#eaf3fb;"></div>
<div class="t" style="left:867.30px;width:600px;text-align:center;top:414.18px;font-size:9.3px;color:#4a7db5;font-weight:bold;font-style:normal;transform:scaleX(0.98);transform-origin:center center;">CBV Recruitment Capacity unavailable</div>
<div class="b" style="left:1108.60px;top:424.70px;width:114px;height:114px;background:repeating-conic-gradient(from 260deg at 50% 50%, rgba(0,0,0,0) 0deg, rgba(0,0,0,0) 1.2deg, rgba(0,0,0,0.035) 1.2deg, rgba(0,0,0,0.035) 2deg), conic-gradient(from 260deg at 50% 50%, #e5322a 0deg, #ea682c 20deg, #f0a832 40deg, #e6cc30 60deg, #e0dc2c 80deg, #dce42c 100deg, #d4e42c 120deg, #c0e030 140deg, #98dc30 160deg, #5cda2c 180deg, #30dc22 200deg, #30dc22 280deg, #e5322a 280deg, #e5322a 360deg);clip-path:path('M0.87 66.90 A57 57 0 1 1 113.13 66.90 L84.57 61.86 A28 28 0 1 0 29.43 61.86 Z');"></div>
<svg class="b" style="left:1098.60px;top:422.70px" width="134" height="118" viewBox="-10 -2 134 118"><line x1="1.16" y1="66.85" x2="7.27" y2="65.77" stroke="#1e1e1e" stroke-width="1.3"/><line x1="0.33" y1="58.98" x2="3.53" y2="58.87" stroke="#1e1e1e" stroke-width="1.1"/><line x1="0.61" y1="51.07" x2="3.79" y2="51.41" stroke="#1e1e1e" stroke-width="1.1"/><line x1="1.98" y1="43.28" x2="5.09" y2="44.06" stroke="#1e1e1e" stroke-width="1.1"/><line x1="4.43" y1="35.76" x2="7.40" y2="36.96" stroke="#1e1e1e" stroke-width="1.1"/><line x1="7.90" y1="28.65" x2="13.27" y2="31.75" stroke="#1e1e1e" stroke-width="1.3"/><line x1="12.32" y1="22.09" x2="14.84" y2="24.06" stroke="#1e1e1e" stroke-width="1.1"/><line x1="17.61" y1="16.21" x2="19.84" y2="18.52" stroke="#1e1e1e" stroke-width="1.1"/><line x1="23.67" y1="11.13" x2="25.55" y2="13.72" stroke="#1e1e1e" stroke-width="1.1"/><line x1="30.38" y1="6.94" x2="31.88" y2="9.76" stroke="#1e1e1e" stroke-width="1.1"/><line x1="37.61" y1="3.72" x2="39.73" y2="9.55" stroke="#1e1e1e" stroke-width="1.3"/><line x1="45.21" y1="1.54" x2="45.88" y2="4.67" stroke="#1e1e1e" stroke-width="1.1"/><line x1="53.04" y1="0.44" x2="53.27" y2="3.63" stroke="#1e1e1e" stroke-width="1.1"/><line x1="60.96" y1="0.44" x2="60.73" y2="3.63" stroke="#1e1e1e" stroke-width="1.1"/><line x1="68.79" y1="1.54" x2="68.12" y2="4.67" stroke="#1e1e1e" stroke-width="1.1"/><line x1="76.39" y1="3.72" x2="74.27" y2="9.55" stroke="#1e1e1e" stroke-width="1.3"/><line x1="83.62" y1="6.94" x2="82.12" y2="9.76" stroke="#1e1e1e" stroke-width="1.1"/><line x1="90.33" y1="11.13" x2="88.45" y2="13.72" stroke="#1e1e1e" stroke-width="1.1"/><line x1="96.39" y1="16.21" x2="94.16" y2="18.52" stroke="#1e1e1e" stroke-width="1.1"/><line x1="101.68" y1="22.09" x2="99.16" y2="24.06" stroke="#1e1e1e" stroke-width="1.1"/><line x1="106.10" y1="28.65" x2="100.73" y2="31.75" stroke="#1e1e1e" stroke-width="1.3"/><line x1="109.57" y1="35.76" x2="106.60" y2="36.96" stroke="#1e1e1e" stroke-width="1.1"/><line x1="112.02" y1="43.28" x2="108.91" y2="44.06" stroke="#1e1e1e" stroke-width="1.1"/><line x1="113.39" y1="51.07" x2="110.21" y2="51.41" stroke="#1e1e1e" stroke-width="1.1"/><line x1="113.67" y1="58.98" x2="110.47" y2="58.87" stroke="#1e1e1e" stroke-width="1.1"/><line x1="112.84" y1="66.85" x2="106.73" y2="65.77" stroke="#1e1e1e" stroke-width="1.3"/><text x="13.70" y="39.60" text-anchor="start" font-weight="bold" font-size="7.6" fill="#2a2a2a" style="text-shadow:0 0 1.5px rgba(0,0,0,0.45)">5</text><text x="39.90" y="17.62" text-anchor="start" font-weight="bold" font-size="7.6" fill="#2a2a2a" style="text-shadow:0 0 1.5px rgba(0,0,0,0.45)">10</text><text x="74.10" y="17.62" text-anchor="end" font-weight="bold" font-size="7.6" fill="#2a2a2a" style="text-shadow:0 0 1.5px rgba(0,0,0,0.45)">15</text><text x="100.30" y="39.60" text-anchor="end" font-weight="bold" font-size="7.6" fill="#2a2a2a" style="text-shadow:0 0 1.5px rgba(0,0,0,0.45)">20</text><text x="7.90" y="73.30" text-anchor="start" font-weight="bold" font-size="7.2" fill="#3a3a3a" style="text-shadow:0 0 1.5px rgba(0,0,0,0.45)">0</text><text x="106.40" y="73.30" text-anchor="end" font-weight="bold" font-size="7.2" fill="#3a3a3a" style="text-shadow:0 0 1.5px rgba(0,0,0,0.45)">25</text><path d="M52.75 57.66 L50.80 16.98 L61.25 56.34 Z" fill="#4b3e9c"/><circle cx="57" cy="57" r="4.4" fill="#4b3e9c"/><text x="58.90" y="70.70" text-anchor="middle" font-family="Liberation Sans" font-weight="bold" font-size="9.8" fill="#111">11.4</text></svg>
<div class="b" style="left:1081.5px;top:498.7px;width:171.5px;height:12.3px;background:#eaf3fb;"></div>
<div class="t" style="left:867.30px;width:600px;text-align:center;top:501.63px;font-size:9.3px;color:#4a7db5;font-weight:bold;font-style:normal;transform:scaleX(0.995);transform-origin:center center;">Capillary Blood Volume absolute</div>
<div class="b" style="left:1108.60px;top:512.25px;width:114px;height:114px;background:repeating-conic-gradient(from 260deg at 50% 50%, rgba(0,0,0,0) 0deg, rgba(0,0,0,0) 1.2deg, rgba(0,0,0,0.035) 1.2deg, rgba(0,0,0,0.035) 2deg), conic-gradient(from 260deg at 50% 50%, #e5322a 0deg, #ea682c 20deg, #f0a832 40deg, #e6cc30 60deg, #e0dc2c 80deg, #dce42c 100deg, #d4e42c 120deg, #c0e030 140deg, #98dc30 160deg, #5cda2c 180deg, #30dc22 200deg, #30dc22 280deg, #e5322a 280deg, #e5322a 360deg);clip-path:path('M0.87 66.90 A57 57 0 1 1 113.13 66.90 L84.57 61.86 A28 28 0 1 0 29.43 61.86 Z');"></div>
<svg class="b" style="left:1098.60px;top:510.25px" width="134" height="118" viewBox="-10 -2 134 118"><line x1="112.84" y1="66.85" x2="106.73" y2="65.77" stroke="#1e1e1e" stroke-width="1.3"/><line x1="112.84" y1="47.15" x2="109.69" y2="47.71" stroke="#1e1e1e" stroke-width="1.1"/><line x1="106.10" y1="28.65" x2="100.73" y2="31.75" stroke="#1e1e1e" stroke-width="1.3"/><line x1="93.45" y1="13.57" x2="91.39" y2="16.02" stroke="#1e1e1e" stroke-width="1.1"/><line x1="76.39" y1="3.72" x2="74.27" y2="9.55" stroke="#1e1e1e" stroke-width="1.3"/><line x1="57.00" y1="0.30" x2="57.00" y2="3.50" stroke="#1e1e1e" stroke-width="1.1"/><line x1="37.61" y1="3.72" x2="39.73" y2="9.55" stroke="#1e1e1e" stroke-width="1.3"/><line x1="20.55" y1="13.57" x2="22.61" y2="16.02" stroke="#1e1e1e" stroke-width="1.1"/><line x1="7.90" y1="28.65" x2="13.27" y2="31.75" stroke="#1e1e1e" stroke-width="1.3"/><line x1="1.16" y1="47.15" x2="4.31" y2="47.71" stroke="#1e1e1e" stroke-width="1.1"/><line x1="1.16" y1="66.85" x2="7.27" y2="65.77" stroke="#1e1e1e" stroke-width="1.3"/><text x="13.70" y="39.60" text-anchor="start" font-weight="bold" font-size="7.6" fill="#2a2a2a" style="text-shadow:0 0 1.5px rgba(0,0,0,0.45)">4</text><text x="39.90" y="17.62" text-anchor="start" font-weight="bold" font-size="7.6" fill="#2a2a2a" style="text-shadow:0 0 1.5px rgba(0,0,0,0.45)">3</text><text x="74.10" y="17.62" text-anchor="end" font-weight="bold" font-size="7.6" fill="#2a2a2a" style="text-shadow:0 0 1.5px rgba(0,0,0,0.45)">2</text><text x="100.30" y="39.60" text-anchor="end" font-weight="bold" font-size="7.6" fill="#2a2a2a" style="text-shadow:0 0 1.5px rgba(0,0,0,0.45)">1</text><text x="7.90" y="73.30" text-anchor="start" font-weight="bold" font-size="7.2" fill="#3a3a3a" style="text-shadow:0 0 1.5px rgba(0,0,0,0.45)">5</text><text x="106.40" y="73.30" text-anchor="end" font-weight="bold" font-size="7.2" fill="#3a3a3a" style="text-shadow:0 0 1.5px rgba(0,0,0,0.45)">0</text><path d="M53.07 55.25 L73.47 20.00 L60.93 58.75 Z" fill="#4b3e9c"/><circle cx="57" cy="57" r="4.4" fill="#4b3e9c"/><text x="58.90" y="70.70" text-anchor="middle" font-family="Liberation Sans" font-weight="bold" font-size="9.8" fill="#111">1.90</text></svg>
<div class="b" style="left:1081.5px;top:586.15px;width:171.5px;height:12.3px;background:#eaf3fb;"></div>
<div class="t" style="left:867.30px;width:600px;text-align:center;top:589.08px;font-size:9.3px;color:#4a7db5;font-weight:bold;font-style:normal;transform:scaleX(0.95);transform-origin:center center;">PBR static</div>
<div class="b" style="left:1108.60px;top:599.80px;width:114px;height:114px;background:repeating-conic-gradient(from 260deg at 50% 50%, rgba(0,0,0,0) 0deg, rgba(0,0,0,0) 1.2deg, rgba(0,0,0,0.035) 1.2deg, rgba(0,0,0,0.035) 2deg), conic-gradient(from 260deg at 50% 50%, #e5322a 0deg, #ea682c 20deg, #f0a832 40deg, #e6cc30 60deg, #e0dc2c 80deg, #dce42c 100deg, #d4e42c 120deg, #c0e030 140deg, #98dc30 160deg, #5cda2c 180deg, #30dc22 200deg, #30dc22 280deg, #e5322a 280deg, #e5322a 360deg);clip-path:path('M0.87 66.90 A57 57 0 1 1 113.13 66.90 L84.57 61.86 A28 28 0 1 0 29.43 61.86 Z');"></div>
<svg class="b" style="left:1098.60px;top:597.80px" width="134" height="118" viewBox="-10 -2 134 118"><line x1="1.16" y1="66.85" x2="7.27" y2="65.77" stroke="#1e1e1e" stroke-width="1.3"/><line x1="0.30" y1="57.00" x2="3.50" y2="57.00" stroke="#1e1e1e" stroke-width="1.1"/><line x1="1.16" y1="47.15" x2="7.27" y2="48.23" stroke="#1e1e1e" stroke-width="1.3"/><line x1="3.72" y1="37.61" x2="6.73" y2="38.70" stroke="#1e1e1e" stroke-width="1.1"/><line x1="7.90" y1="28.65" x2="13.27" y2="31.75" stroke="#1e1e1e" stroke-width="1.3"/><line x1="13.57" y1="20.55" x2="16.02" y2="22.61" stroke="#1e1e1e" stroke-width="1.1"/><line x1="20.55" y1="13.57" x2="24.54" y2="18.31" stroke="#1e1e1e" stroke-width="1.3"/><line x1="28.65" y1="7.90" x2="30.25" y2="10.67" stroke="#1e1e1e" stroke-width="1.1"/><line x1="37.61" y1="3.72" x2="39.73" y2="9.55" stroke="#1e1e1e" stroke-width="1.3"/><line x1="47.15" y1="1.16" x2="47.71" y2="4.31" stroke="#1e1e1e" stroke-width="1.1"/><line x1="57.00" y1="0.30" x2="57.00" y2="6.50" stroke="#1e1e1e" stroke-width="1.3"/><line x1="66.85" y1="1.16" x2="66.29" y2="4.31" stroke="#1e1e1e" stroke-width="1.1"/><line x1="76.39" y1="3.72" x2="74.27" y2="9.55" stroke="#1e1e1e" stroke-width="1.3"/><line x1="85.35" y1="7.90" x2="83.75" y2="10.67" stroke="#1e1e1e" stroke-width="1.1"/><line x1="93.45" y1="13.57" x2="89.46" y2="18.31" stroke="#1e1e1e" stroke-width="1.3"/><line x1="100.43" y1="20.55" x2="97.98" y2="22.61" stroke="#1e1e1e" stroke-width="1.1"/><line x1="106.10" y1="28.65" x2="100.73" y2="31.75" stroke="#1e1e1e" stroke-width="1.3"/><line x1="110.28" y1="37.61" x2="107.27" y2="38.70" stroke="#1e1e1e" stroke-width="1.1"/><line x1="112.84" y1="47.15" x2="106.73" y2="48.23" stroke="#1e1e1e" stroke-width="1.3"/><line x1="113.70" y1="57.00" x2="110.50" y2="57.00" stroke="#1e1e1e" stroke-width="1.1"/><line x1="112.84" y1="66.85" x2="106.73" y2="65.77" stroke="#1e1e1e" stroke-width="1.3"/><text x="7.76" y="55.92" text-anchor="start" font-weight="bold" font-size="7.6" fill="#2a2a2a" style="text-shadow:0 0 1.5px rgba(0,0,0,0.45)">1</text><text x="13.70" y="39.60" text-anchor="start" font-weight="bold" font-size="7.6" fill="#2a2a2a" style="text-shadow:0 0 1.5px rgba(0,0,0,0.45)">2</text><text x="24.86" y="26.30" text-anchor="start" font-weight="bold" font-size="7.6" fill="#2a2a2a" style="text-shadow:0 0 1.5px rgba(0,0,0,0.45)">3</text><text x="39.90" y="17.62" text-anchor="start" font-weight="bold" font-size="7.6" fill="#2a2a2a" style="text-shadow:0 0 1.5px rgba(0,0,0,0.45)">4</text><text x="57.00" y="14.60" text-anchor="middle" font-weight="bold" font-size="7.6" fill="#2a2a2a" style="text-shadow:0 0 1.5px rgba(0,0,0,0.45)">5</text><text x="74.10" y="17.62" text-anchor="end" font-weight="bold" font-size="7.6" fill="#2a2a2a" style="text-shadow:0 0 1.5px rgba(0,0,0,0.45)">6</text><text x="89.14" y="26.30" text-anchor="end" font-weight="bold" font-size="7.6" fill="#2a2a2a" style="text-shadow:0 0 1.5px rgba(0,0,0,0.45)">7</text><text x="100.30" y="39.60" text-anchor="end" font-weight="bold" font-size="7.6" fill="#2a2a2a" style="text-shadow:0 0 1.5px rgba(0,0,0,0.45)">8</text><text x="106.24" y="55.92" text-anchor="end" font-weight="bold" font-size="7.6" fill="#2a2a2a" style="text-shadow:0 0 1.5px rgba(0,0,0,0.45)">9</text><text x="7.90" y="73.30" text-anchor="start" font-weight="bold" font-size="7.2" fill="#3a3a3a" style="text-shadow:0 0 1.5px rgba(0,0,0,0.45)">0</text><text x="106.40" y="73.30" text-anchor="end" font-weight="bold" font-size="7.2" fill="#3a3a3a" style="text-shadow:0 0 1.5px rgba(0,0,0,0.45)">10</text><path d="M57.75 52.77 L96.88 64.03 L56.25 61.23 Z" fill="#4b3e9c"/><circle cx="57" cy="57" r="4.4" fill="#4b3e9c"/><text x="58.90" y="70.70" text-anchor="middle" font-family="Liberation Sans" font-weight="bold" font-size="9.8" fill="#111">11.96</text></svg>
<div class="b" style="left:1081.5px;top:673.6px;width:171.5px;height:11.399999999999977px;background:#eaf3fb;"></div>
<div class="t" style="left:867.30px;width:600px;text-align:center;top:676.53px;font-size:9.3px;color:#4a7db5;font-weight:bold;font-style:normal;transform:scaleX(0.98);transform-origin:center center;">MicroVascular Health Score absolute</div>
</body></html>
